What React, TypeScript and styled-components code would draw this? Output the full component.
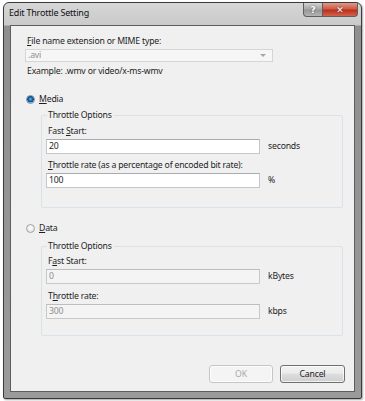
import React from "react";
import styled, { createGlobalStyle } from "styled-components";

const Global = createGlobalStyle`
  html, body { margin: 0; padding: 0; background: #ffffff; }
  body { font-family: "Noto Sans", "Open Sans", sans-serif; font-size: 8.7px; letter-spacing: -0.2px; color: #1e1e1e; }
  * { box-sizing: border-box; }
`;

const Page = styled.div`
  width: 365px;
  height: 401px;
  padding: 2px 3px 0 3px;
`;

const Window = styled.div`
  width: 359px;
  height: 397px;
  border: 1px solid #3a3a3a;
  border-radius: 6px 6px 2px 2px;
  background: linear-gradient(#d6d6d6, #cacaca 22px, #8f8f8f 23px, #9a9a9a);
  box-shadow: 1px 1px 2px rgba(0, 0, 0, 0.35);
  display: flex;
  flex-direction: column;
  padding: 0 6px 6px 6px;
`;

const TitleBar = styled.div`
  height: 22px;
  margin: 0 -6px;
  padding-left: 5px;
  display: flex;
  align-items: flex-start;
`;

const Title = styled.div`
  flex: 1;
  line-height: 20px;
  font-size: 9px;
  color: #111;
`;

const Caption = styled.div`
  display: flex;
  margin-right: 3px;
`;

const CapButton = styled.div<{ $close?: boolean }>`
  width: ${(p) => (p.$close ? 35 : 20)}px;
  height: 14px;
  display: flex;
  align-items: center;
  justify-content: center;
  color: #fff;
  font-family: "DejaVu Sans", sans-serif;
  font-weight: bold;
  font-size: 9px;
  letter-spacing: 0;
  border: 1px solid #5e5e5e;
  border-top: none;
  border-left-width: ${(p) => (p.$close ? 0 : 1)}px;
  border-radius: ${(p) => (p.$close ? "0 0 4px 0" : "0 0 0 4px")};
  background: ${(p) =>
    p.$close
      ? "linear-gradient(#dd9a8c, #cf5a44 45%, #b8301c 55%, #d5614a)"
      : "linear-gradient(#d2d2d2, #a9a9a9 45%, #979797 55%, #b4b4b4)"};
  text-shadow: 0 0 2px rgba(0, 0, 0, 0.6);
`;

const Content = styled.div`
  flex: 1;
  background: #f0f0f0;
  border: 1px solid #5e5e5e;
  display: flex;
  flex-direction: column;
  padding: 0 9px 0 14px;
`;

const Label = styled.div<{ $top?: number }>`
  line-height: 13px;
  padding-left: 2px;
  margin-top: ${(p) => p.$top ?? 0}px;
  white-space: nowrap;
`;

const Combo = styled.div`
  width: 248px;
  height: 13px;
  margin-top: 1px;
  border: 1px solid #d5d5d5;
  background: #f6f6f6;
  color: #8f8f8f;
  display: flex;
  align-items: center;
  padding-left: 2px;
  line-height: 11px;
`;

const ComboText = styled.span`
  flex: 1;
`;

const Arrow = styled.span`
  width: 0;
  height: 0;
  margin-right: 6px;
  border-left: 3px solid transparent;
  border-right: 3px solid transparent;
  border-top: 3px solid #a6a6a6;
`;

const RadioRow = styled.div<{ $top: number }>`
  display: flex;
  align-items: center;
  gap: 4px;
  margin-top: ${(p) => p.$top}px;
  padding-left: 1px;
  line-height: 13px;
`;

const RadioCircle = styled.span<{ $checked?: boolean }>`
  width: 9px;
  height: 9px;
  border-radius: 50%;
  border: 1px solid ${(p) => (p.$checked ? "#6f8ea8" : "#a2a2a2")};
  background: ${(p) =>
    p.$checked
      ? "radial-gradient(circle at 50% 45%, #6ec3f2 0, #1f78c0 1.5px, #0d3f72 3px, #cfdbe6 3.6px, #f2f6fa 4.5px)"
      : "radial-gradient(circle at 50% 40%, #ffffff, #dcdcdc)"};
`;

const Group = styled.fieldset<{ $top: number }>`
  margin: ${(p) => p.$top}px 0 0 16px;
  width: 302px;
  border: 1px solid #d9e2e8;
  border-radius: 2px;
  padding: 0 0 0 4px;
  min-width: 0;
`;

const Legend = styled.legend`
  margin-left: 1px;
  padding: 0 2px 0 1px;
  line-height: 13px;
`;

const FieldRow = styled.div`
  display: flex;
  align-items: center;
  gap: 8px;
  margin-top: 1px;
`;

const TextBox = styled.div<{ $disabled?: boolean }>`
  width: 214px;
  height: 15px;
  border: 1px solid ${(p) => (p.$disabled ? "#c8c8c8" : "#c5c7cc")};
  border-top-color: ${(p) => (p.$disabled ? "#bdbdbd" : "#a9abb0")};
  background: ${(p) => (p.$disabled ? "#f4f4f4" : "#ffffff")};
  color: ${(p) => (p.$disabled ? "#8f8f8f" : "#1e1e1e")};
  padding-left: 2px;
  line-height: 13px;
`;

const Unit = styled.span`
  line-height: 13px;
`;

const Spacer = styled.div<{ $h: number }>`
  height: ${(p) => p.$h}px;
`;

const Footer = styled.div`
  margin-top: auto;
  display: flex;
  justify-content: flex-end;
  gap: 7px;
  padding-bottom: 8px;
`;

const Button = styled.div<{ $disabled?: boolean; $w: number }>`
  width: ${(p) => p.$w}px;
  height: 18px;
  border-radius: 3px;
  display: flex;
  align-items: center;
  justify-content: center;
  border: 1px solid ${(p) => (p.$disabled ? "#c6c6c6" : "#707070")};
  color: ${(p) => (p.$disabled ? "#a8a8a8" : "#1e1e1e")};
  background: ${(p) =>
    p.$disabled
      ? "#f4f4f4"
      : "linear-gradient(#f2f2f2, #ebebeb 45%, #dddddd 50%, #cfcfcf)"};
  box-shadow: inset 0 0 0 1px rgba(255, 255, 255, 0.7);
`;

const U = styled.span`
  text-decoration: underline;
`;

export default function App() {
  return (
    <Page>
      <Global />
      <Window>
        <TitleBar>
          <Title>Edit Throttle Setting</Title>
          <Caption>
            <CapButton>?</CapButton>
            <CapButton $close>✕</CapButton>
          </Caption>
        </TitleBar>
        <Content>
          <Label $top={9}>
            <U>F</U>ile name extension or MIME type:
          </Label>
          <Combo>
            <ComboText>.avi</ComboText>
            <Arrow />
          </Combo>
          <Label $top={3}>Example: .wmv or video/x-ms-wmv</Label>

          <RadioRow $top={15}>
            <RadioCircle $checked />
            <span>
              <U>M</U>edia
            </span>
          </RadioRow>
          <Group $top={3}>
            <Legend>Throttle Options</Legend>
            <Label $top={3}>
              Fast <U>S</U>tart:
            </Label>
            <FieldRow>
              <TextBox>20</TextBox>
              <Unit>seconds</Unit>
            </FieldRow>
            <Label $top={5}>
              <U>T</U>hrottle rate (as a percentage of encoded bit rate):
            </Label>
            <FieldRow>
              <TextBox>100</TextBox>
              <Unit>%</Unit>
            </FieldRow>
            <Spacer $h={19} />
          </Group>

          <RadioRow $top={14}>
            <RadioCircle />
            <span>
              <U>D</U>ata
            </span>
          </RadioRow>
          <Group $top={5}>
            <Legend>Throttle Options</Legend>
            <Label $top={2}>
              F<U>a</U>st Start:
            </Label>
            <FieldRow>
              <TextBox $disabled>0</TextBox>
              <Unit>kBytes</Unit>
            </FieldRow>
            <Label $top={6}>
              T<U>h</U>rottle rate:
            </Label>
            <FieldRow>
              <TextBox $disabled>300</TextBox>
              <Unit>kbps</Unit>
            </FieldRow>
            <Spacer $h={16} />
          </Group>

          <Footer>
            <Button $w={64} $disabled>
              OK
            </Button>
            <Button $w={65}>Cancel</Button>
          </Footer>
        </Content>
      </Window>
    </Page>
  );
}
